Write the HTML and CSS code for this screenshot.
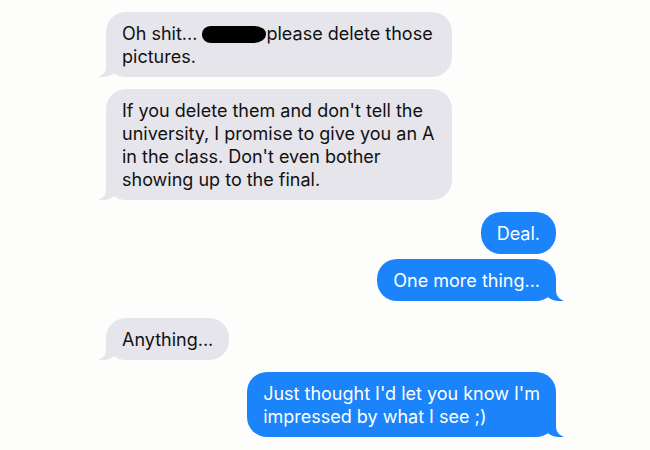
FILE: index.html
```html
<!DOCTYPE html>
<html lang="en">
<head>
    <meta charset="UTF-8">
    <meta name="viewport" content="width=device-width, initial-scale=1.0">
    <title>Messages</title>
    <link rel="stylesheet" href="styles.css">
</head>
<body>
    <div class="thread">
        <div class="msg them tail wide">Oh shit... <span class="redacted"></span>please delete those<br>pictures.</div>
        <div class="msg them tail wide gap">If you delete them and don't tell the<br>university, I promise to give you an A<br>in the class. Don't even bother<br>showing up to the final.</div>
        <div class="msg me gap">Deal.</div>
        <div class="msg me tail near">One more thing...</div>
        <div class="msg them tail gap-lg">Anything...</div>
        <div class="msg me tail gap">Just thought I'd let you know I'm<br>impressed by what I see ;)</div>
    </div>
</body>
</html>
```

FILE: styles.css
```css
body {
    margin: 0;
    padding: 0;
    background: #fdfdfc;
    font-family: Inter, "Liberation Sans", Arial, sans-serif;
    font-size: 18px;
    color: #111;
}
.thread {
    width: 450px;
    margin-left: 106px;
    padding-top: 12px;
    display: flex;
    flex-direction: column;
}
.msg {
    position: relative;
    z-index: 0;
    padding: 10px 16px 9px;
    line-height: 23px;
    border-radius: 20px;
    white-space: nowrap;
}
.wide { width: 314px; }
.them {
    align-self: flex-start;
    background: #e6e5eb;
}
.me {
    align-self: flex-end;
    background: #1b84fa;
    color: #fff;
}
.gap { margin-top: 12px; }
.gap-lg { margin-top: 17px; }
.near { margin-top: 5px; }

.redacted {
    display: inline-block;
    width: 64px;
    height: 17px;
    vertical-align: -3px;
    background: #000;
    border-radius: 9px 12px 12px 9px / 8px 8px 9px 8px;
}

/* bubble tails */
.tail::before,
.tail::after {
    content: "";
    position: absolute;
    bottom: 0;
    height: 22px;
    z-index: -1;
}
.them.tail::before {
    left: -7px;
    width: 20px;
    background: #e6e5eb;
    border-bottom-right-radius: 16px 14px;
}
.them.tail::after {
    left: -26px;
    width: 26px;
    background: #fdfdfc;
    border-bottom-right-radius: 10px;
}
.me.tail::before {
    right: -7px;
    width: 20px;
    background: #1b84fa;
    border-bottom-left-radius: 16px 14px;
}
.me.tail::after {
    right: -26px;
    width: 26px;
    background: #fdfdfc;
    border-bottom-left-radius: 10px;
}
```
